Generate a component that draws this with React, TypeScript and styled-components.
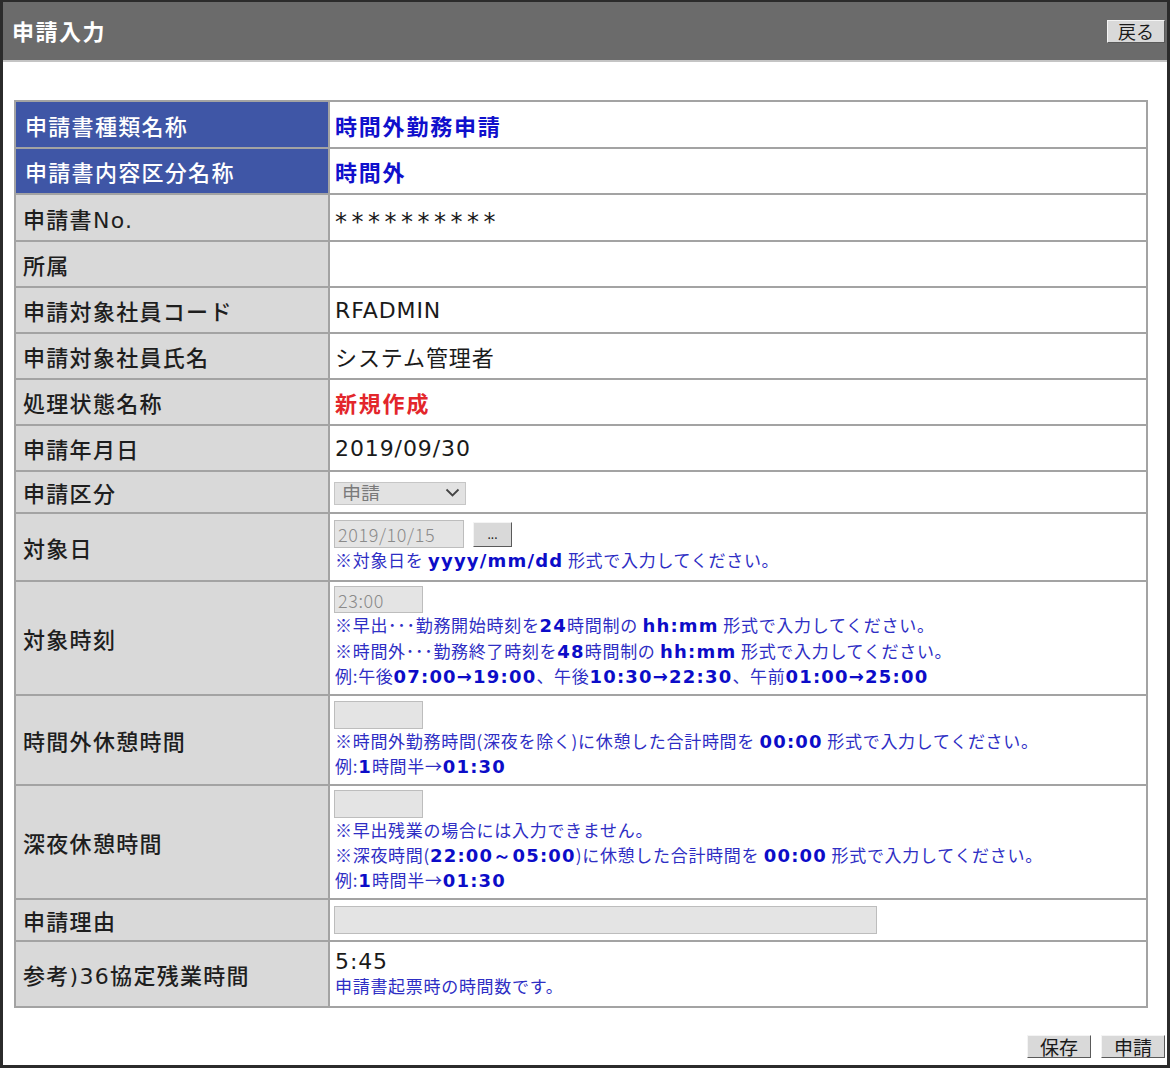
import React from "react";
import styled, { createGlobalStyle } from "styled-components";

const Global = createGlobalStyle`
  html, body { margin: 0; padding: 0; background: #ffffff; }
  body { font-family: "DejaVu Sans", "Noto Sans CJK JP", sans-serif; }
  * { box-sizing: border-box; }
`;

const JP = `"DejaVu Sans", "Noto Sans CJK JP", sans-serif`;
const JPONLY = `"Noto Sans CJK JP", sans-serif`;

const Frame = styled.div`
  width: 1170px;
  height: 1068px;
  border-style: solid;
  border-color: #2b2b2b;
  border-width: 2px 3px 3px 3px;
  display: flex;
  flex-direction: column;
  background: #fff;
`;

const Header = styled.header`
  height: 60px;
  background: #6b6b6b;
  border-bottom: 2px solid #c4c4c4;
  display: flex;
  align-items: center;
  justify-content: space-between;
  padding: 0 2px 0 9px;
`;

const Title = styled.h1`
  margin: 0;
  font-family: ${JPONLY};
  font-size: 22px;
  font-weight: 700;
  color: #ffffff;
  letter-spacing: 1.5px;
  margin-top: -2px;
`;

const BevelButton = styled.button<{ $w: number; $h: number; $fs: number }>`
  width: ${(p) => p.$w}px;
  height: ${(p) => p.$h}px;
  padding: 0;
  font-family: ${JPONLY};
  font-size: ${(p) => p.$fs}px;
  line-height: 1;
  color: #1a1a1a;
  background: #d9d9d9;
  border: 1px solid;
  border-color: #f4f4f4 #5a5a5a #5a5a5a #f4f4f4;
  display: flex;
  align-items: center;
  justify-content: center;
`;

const Content = styled.main`
  flex: 1;
  padding: 38px 0 0 11px;
`;

const Form = styled.div`
  width: 1134px;
  border: 2px solid #a3a3a3;
`;

const Row = styled.div<{ $h: number }>`
  display: grid;
  grid-template-columns: 314px 1fr;
  min-height: ${(p) => p.$h}px;
  & + & {
    border-top: 2px solid #a3a3a3;
  }
`;

const Label = styled.div<{ $blue?: boolean }>`
  display: flex;
  align-items: center;
  padding-left: ${(p) => (p.$blue ? 9 : 7)}px;
  background: ${(p) => (p.$blue ? "#3f56a6" : "#d9d9d9")};
  color: ${(p) => (p.$blue ? "#ffffff" : "#1e1e1e")};
  border-right: 2px solid #a3a3a3;
  font-family: ${JP};
  font-size: 22px;
  font-weight: 500;
  letter-spacing: 1.3px;
`;

const Value = styled.div<{ $tone?: "blue" | "red" | "plain" }>`
  display: flex;
  flex-direction: column;
  justify-content: center;
  align-items: flex-start;
  padding: 0 6px 0 5px;
  font-family: ${JP};
  font-size: 22px;
  font-weight: ${(p) => (p.$tone === "blue" || p.$tone === "red" ? 700 : 400)};
  letter-spacing: ${(p) => (p.$tone === "blue" || p.$tone === "red" ? "1.8px" : "0.9px")};
  color: ${(p) =>
    p.$tone === "blue" ? "#1010cc" : p.$tone === "red" ? "#e3262b" : "#1a1a1a"};
`;

const Stars = styled.span`
  font-size: 24px;
  letter-spacing: 4.5px;
  line-height: 1;
  margin-top: 8px;
`;

const InlineGroup = styled.div`
  display: flex;
  align-items: center;
  gap: 9px;
`;

const Field = styled.input<{ $w: number; $h: number }>`
  width: ${(p) => p.$w}px;
  height: ${(p) => p.$h}px;
  margin: 0 0 0 -1px;
  padding: 0 3px;
  background: #e4e4e4;
  border: 1px solid #bdbdbd;
  color: #8a8a8a;
  font-family: ${JPONLY};
  font-size: 18px;
  font-weight: 300;
  letter-spacing: 0.6px;
  outline: none;
`;

const SelectBox = styled.div`
  position: relative;
  width: 132px;
  height: 23px;
  margin-left: -1px;
`;

const Select = styled.select`
  width: 100%;
  height: 100%;
  margin: 0;
  padding: 0 0 3px 7px;
  appearance: none;
  -webkit-appearance: none;
  background: #e2e2e2;
  border: 1px solid #c6c6c6;
  border-radius: 0;
  color: #7a7a7a;
  font-family: ${JPONLY};
  font-size: 19px;
  line-height: 20px;
  opacity: 1;
`;

const Chevron = styled.svg`
  position: absolute;
  right: 6px;
  top: 7px;
  pointer-events: none;
`;

const Help = styled.div`
  font-family: ${JPONLY};
  font-size: 17px;
  font-weight: 400;
  line-height: 24.5px;
  color: #2e2ec4;
  letter-spacing: 0.7px;
  white-space: nowrap;
`;

const Num = styled.span`
  font-family: "DejaVu Sans", sans-serif;
  font-weight: 700;
  font-size: 18px;
  color: #0c0cc8;
  letter-spacing: 1.2px;
`;

const Footer = styled.footer`
  display: flex;
  justify-content: flex-end;
  gap: 10px;
  padding: 0 2px 7px 0;
`;

const Chev = () => (
  <Chevron width="15" height="10" viewBox="0 0 15 10">
    <path d="M1.5 1.5 L7.5 7.5 L13.5 1.5" fill="none" stroke="#444" strokeWidth="1.8" />
  </Chevron>
);

type RowDef = {
  label: string;
  h: number;
  blue?: boolean;
  tone?: "blue" | "red" | "plain";
  content: React.ReactNode;
};

const rows: RowDef[] = [
  { label: "申請書種類名称", h: 45, blue: true, tone: "blue", content: "時間外勤務申請" },
  { label: "申請書内容区分名称", h: 46, blue: true, tone: "blue", content: "時間外" },
  { label: "申請書No.", h: 47, content: <Stars>**********</Stars> },
  { label: "所属", h: 46, content: "" },
  { label: "申請対象社員コード", h: 46, content: "RFADMIN" },
  { label: "申請対象社員氏名", h: 46, content: "システム管理者" },
  { label: "処理状態名称", h: 46, tone: "red", content: "新規作成" },
  { label: "申請年月日", h: 46, content: "2019/09/30" },
  {
    label: "申請区分",
    h: 42,
    content: (
      <SelectBox>
        <Select disabled defaultValue="申請">
          <option>申請</option>
        </Select>
        <Chev />
      </SelectBox>
    ),
  },
  {
    label: "対象日",
    h: 68,
    content: (
      <>
        <InlineGroup>
          <Field $w={130} $h={28} readOnly value="2019/10/15" />
          <BevelButton $w={39} $h={25} $fs={12} type="button">...</BevelButton>
        </InlineGroup>
        <Help>
          ※対象日を <Num>yyyy/mm/dd</Num> 形式で入力してください。
        </Help>
      </>
    ),
  },
  {
    label: "対象時刻",
    h: 114,
    content: (
      <>
        <Field $w={89} $h={27} readOnly value="23:00" />
        <Help>
          ※早出･･･勤務開始時刻を<Num>24</Num>時間制の <Num>hh:mm</Num> 形式で入力してください。
          <br />
          ※時間外･･･勤務終了時刻を<Num>48</Num>時間制の <Num>hh:mm</Num> 形式で入力してください。
          <br />
          例:午後<Num>07:00→19:00</Num>、午後<Num>10:30→22:30</Num>、午前<Num>01:00→25:00</Num>
        </Help>
      </>
    ),
  },
  {
    label: "時間外休憩時間",
    h: 90,
    content: (
      <>
        <Field $w={89} $h={28} readOnly value="" />
        <Help>
          ※時間外勤務時間(深夜を除く)に休憩した合計時間を <Num>00:00</Num> 形式で入力してください。
          <br />
          例:<Num>1</Num>時間半→<Num>01:30</Num>
        </Help>
      </>
    ),
  },
  {
    label: "深夜休憩時間",
    h: 114,
    content: (
      <>
        <Field $w={89} $h={28} readOnly value="" />
        <Help>
          ※早出残業の場合には入力できません。
          <br />
          ※深夜時間(<Num>22:00～05:00</Num>)に休憩した合計時間を <Num>00:00</Num> 形式で入力してください。
          <br />
          例:<Num>1</Num>時間半→<Num>01:30</Num>
        </Help>
      </>
    ),
  },
  {
    label: "申請理由",
    h: 42,
    content: <Field $w={543} $h={28} readOnly value="" />,
  },
  {
    label: "参考)36協定残業時間",
    h: 66,
    content: (
      <>
        <span>5:45</span>
        <Help>申請書起票時の時間数です。</Help>
      </>
    ),
  },
];

export default function App() {
  return (
    <>
      <Global />
      <Frame>
        <Header>
          <Title>申請入力</Title>
          <BevelButton $w={58} $h={23} $fs={18} type="button">戻る</BevelButton>
        </Header>
        <Content>
          <Form>
            {rows.map((r) => (
              <Row key={r.label} $h={r.h}>
                <Label $blue={r.blue}>{r.label}</Label>
                <Value $tone={r.tone}>{r.content}</Value>
              </Row>
            ))}
          </Form>
        </Content>
        <Footer>
          <BevelButton $w={64} $h={23} $fs={19} type="button">保存</BevelButton>
          <BevelButton $w={64} $h={23} $fs={19} type="button">申請</BevelButton>
        </Footer>
      </Frame>
    </>
  );
}
